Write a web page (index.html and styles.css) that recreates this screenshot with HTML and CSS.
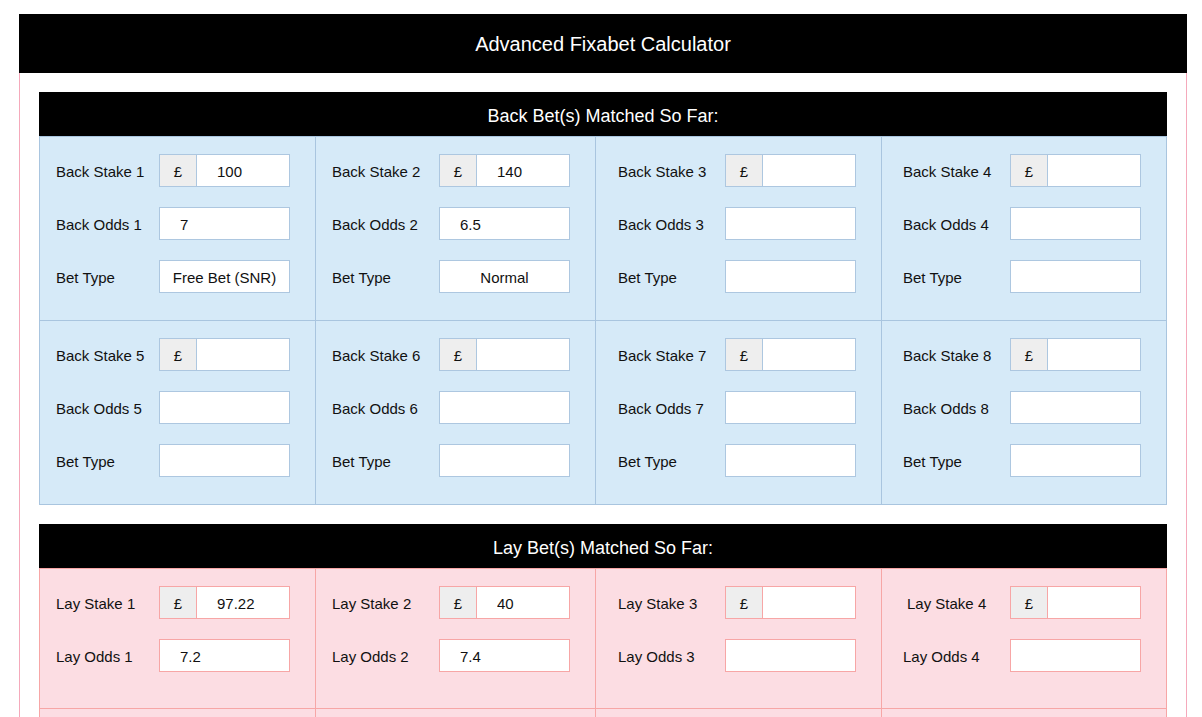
FILE: index.html
```html
<!DOCTYPE html>
<html lang="en">
<head>
<meta charset="utf-8">
<title>Advanced Fixabet Calculator</title>
<link rel="stylesheet" href="styles.css">
</head>
<body>
<div class="calc">
  <h1 class="calc-title">Advanced Fixabet Calculator</h1>
  <div class="calc-body">
    <section class="bets bets-back">
      <h2 class="bets-title">Back Bet(s) Matched So Far:</h2>
      <div class="bets-grid">
        <div class="cell">
          <div class="row"><span class="label">Back Stake 1</span><div class="field group"><span class="addon">£</span><input class="value" type="text" value="100"></div></div>
          <div class="row"><span class="label">Back Odds 1</span><input class="field value" type="text" value="7"></div>
          <div class="row"><span class="label">Bet Type</span><input class="field type" type="text" value="Free Bet (SNR)"></div>
        </div>
        <div class="cell">
          <div class="row"><span class="label">Back Stake 2</span><div class="field group"><span class="addon">£</span><input class="value" type="text" value="140"></div></div>
          <div class="row"><span class="label">Back Odds 2</span><input class="field value" type="text" value="6.5"></div>
          <div class="row"><span class="label">Bet Type</span><input class="field type" type="text" value="Normal"></div>
        </div>
        <div class="cell">
          <div class="row"><span class="label">Back Stake 3</span><div class="field group"><span class="addon">£</span><input class="value" type="text" value=""></div></div>
          <div class="row"><span class="label">Back Odds 3</span><input class="field value" type="text" value=""></div>
          <div class="row"><span class="label">Bet Type</span><input class="field type" type="text" value=""></div>
        </div>
        <div class="cell">
          <div class="row"><span class="label">Back Stake 4</span><div class="field group"><span class="addon">£</span><input class="value" type="text" value=""></div></div>
          <div class="row"><span class="label">Back Odds 4</span><input class="field value" type="text" value=""></div>
          <div class="row"><span class="label">Bet Type</span><input class="field type" type="text" value=""></div>
        </div>
        <div class="cell">
          <div class="row"><span class="label">Back Stake 5</span><div class="field group"><span class="addon">£</span><input class="value" type="text" value=""></div></div>
          <div class="row"><span class="label">Back Odds 5</span><input class="field value" type="text" value=""></div>
          <div class="row"><span class="label">Bet Type</span><input class="field type" type="text" value=""></div>
        </div>
        <div class="cell">
          <div class="row"><span class="label">Back Stake 6</span><div class="field group"><span class="addon">£</span><input class="value" type="text" value=""></div></div>
          <div class="row"><span class="label">Back Odds 6</span><input class="field value" type="text" value=""></div>
          <div class="row"><span class="label">Bet Type</span><input class="field type" type="text" value=""></div>
        </div>
        <div class="cell">
          <div class="row"><span class="label">Back Stake 7</span><div class="field group"><span class="addon">£</span><input class="value" type="text" value=""></div></div>
          <div class="row"><span class="label">Back Odds 7</span><input class="field value" type="text" value=""></div>
          <div class="row"><span class="label">Bet Type</span><input class="field type" type="text" value=""></div>
        </div>
        <div class="cell">
          <div class="row"><span class="label">Back Stake 8</span><div class="field group"><span class="addon">£</span><input class="value" type="text" value=""></div></div>
          <div class="row"><span class="label">Back Odds 8</span><input class="field value" type="text" value=""></div>
          <div class="row"><span class="label">Bet Type</span><input class="field type" type="text" value=""></div>
        </div>
      </div>
    </section>

    <section class="bets bets-lay">
      <h2 class="bets-title">Lay Bet(s) Matched So Far:</h2>
      <div class="bets-grid">
        <div class="cell">
          <div class="row"><span class="label">Lay Stake 1</span><div class="field group"><span class="addon">£</span><input class="value" type="text" value="97.22"></div></div>
          <div class="row"><span class="label">Lay Odds 1</span><input class="field value" type="text" value="7.2"></div>
        </div>
        <div class="cell">
          <div class="row"><span class="label">Lay Stake 2</span><div class="field group"><span class="addon">£</span><input class="value" type="text" value="40"></div></div>
          <div class="row"><span class="label">Lay Odds 2</span><input class="field value" type="text" value="7.4"></div>
        </div>
        <div class="cell">
          <div class="row"><span class="label">Lay Stake 3</span><div class="field group"><span class="addon">£</span><input class="value" type="text" value=""></div></div>
          <div class="row"><span class="label">Lay Odds 3</span><input class="field value" type="text" value=""></div>
        </div>
        <div class="cell">
          <div class="row"><span class="label label-indent">Lay Stake 4</span><div class="field group"><span class="addon">£</span><input class="value" type="text" value=""></div></div>
          <div class="row"><span class="label">Lay Odds 4</span><input class="field value" type="text" value=""></div>
        </div>
        <div class="cell"></div>
        <div class="cell"></div>
        <div class="cell"></div>
        <div class="cell"></div>
      </div>
    </section>
  </div>
</div>
</body>
</html>
```

FILE: styles.css
```css
* {
  box-sizing: border-box;
}

body {
  margin: 0;
  background: #ffffff;
  font-family: "Liberation Sans", Arial, Helvetica, sans-serif;
  color: #111111;
}

.calc {
  width: 1168px;
  margin: 14px 0 0 19px;
}

.calc-title {
  margin: 0;
  height: 59px;
  padding-top: 2px;
  background: #000000;
  color: #ffffff;
  font-size: 20px;
  font-weight: normal;
  display: flex;
  align-items: center;
  justify-content: center;
}

.calc-body {
  border-left: 1px solid #f5a9bb;
  border-right: 1px solid #f5a9bb;
  padding: 19px;
  display: flex;
  flex-direction: column;
  gap: 19px;
}

.bets-title {
  margin: 0;
  height: 44px;
  padding-top: 4px;
  background: #000000;
  color: #ffffff;
  font-size: 18px;
  font-weight: normal;
  display: flex;
  align-items: center;
  justify-content: center;
}

.bets-grid {
  display: grid;
  grid-template-columns: 276px 280px 286px 285px;
  border-left: 1px solid var(--line);
  border-top: 1px solid var(--line);
  background: var(--bg);
}

.bets-back {
  --line: #a9c5df;
  --bg: #d6eaf8;
  --field-line: #adc7e0;
}

.bets-lay {
  --line: #f7a6a6;
  --bg: #fcdde3;
  --field-line: #f7a6a6;
}

.cell {
  border-right: 1px solid var(--line);
  border-bottom: 1px solid var(--line);
  padding: 17px 25px 27px 16px;
  display: flex;
  flex-direction: column;
  gap: 20px;
}

.bets-lay .cell {
  padding-bottom: 36px;
  min-height: 140px;
}

.cell:nth-child(4n+3) {
  padding-left: 22px;
}

.cell:nth-child(4n+4) {
  padding-left: 21px;
}

.row {
  display: flex;
  align-items: center;
  justify-content: space-between;
  height: 33px;
}

.label {
  font-size: 15px;
  white-space: nowrap;
  padding-top: 2px;
}

.label-indent {
  padding-left: 4px;
}

.field {
  width: 131px;
  height: 33px;
  border: 1px solid var(--field-line);
  background: #ffffff;
}

input {
  font-family: inherit;
  font-size: 15px;
  color: #111111;
  margin: 0;
  outline: none;
}

input.value {
  padding: 2px 0 0 20px;
}

.field.value {
  display: block;
}

input.type {
  padding: 2px 4px 0;
  text-align: center;
}

.group {
  display: flex;
}

.addon {
  width: 37px;
  flex: none;
  background: #eeeeee;
  border-right: 1px solid var(--field-line);
  font-size: 15px;
  padding-top: 2px;
  display: flex;
  align-items: center;
  justify-content: center;
}

.group .value {
  flex: 1;
  min-width: 0;
  border: none;
  height: 100%;
  background: #ffffff;
}
```
